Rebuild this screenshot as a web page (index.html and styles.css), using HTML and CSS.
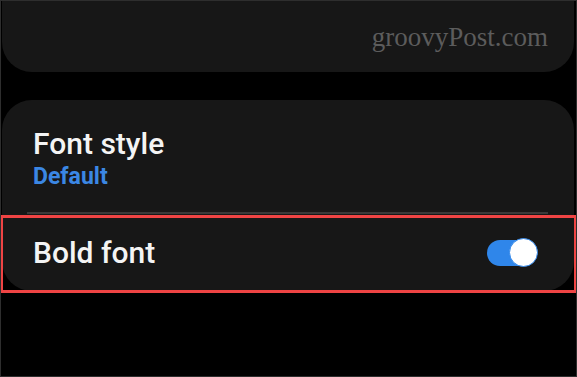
FILE: index.html
```html
<!DOCTYPE html>
<html lang="en">
<head>
    <meta charset="UTF-8">
    <meta name="viewport" content="width=device-width, initial-scale=1.0">
    <title>Font settings</title>
    <link rel="stylesheet" href="styles.css">
</head>
<body>
    <div class="screen">
        <div class="card card-top">
            <span class="watermark">groovyPost.com</span>
        </div>

        <div class="card card-font">
            <div class="item item-style">
                <div class="item-title">Font style</div>
                <div class="item-value">Default</div>
            </div>
            <div class="divider"></div>
            <div class="item item-bold">
                <div class="item-title">Bold font</div>
                <div class="switch">
                    <span class="switch-knob"></span>
                </div>
            </div>
        </div>

        <div class="highlight"></div>
    </div>
</body>
</html>
```

FILE: styles.css
```css
body {
    margin: 0;
    padding: 0;
    background-color: #000;
    font-family: Roboto, "Noto Sans", Arial, sans-serif;
}

.screen {
    position: relative;
    width: 575px;
    height: 375px;
    border: 1px solid #2e2e2e;
    background-color: #000;
    overflow: hidden;
}

.card {
    background-color: #171717;
    margin: 0 2px 0 1px;
}

.card-top {
    height: 71px;
    border-radius: 0 0 30px 30px;
    display: flex;
    justify-content: flex-end;
    align-items: flex-start;
    padding-right: 26px;
}

.watermark {
    font-family: "Liberation Serif", "DejaVu Serif", serif;
    font-size: 27px;
    color: #5c5c5c;
    margin-top: 21px;
}

.card-font {
    margin-top: 28px;
    height: 191px;
    border-radius: 30px;
}

.item {
    padding: 0 31px;
}

.item-style {
    padding-top: 25px;
    height: 112px;
    box-sizing: border-box;
}

.item-title {
    color: #f4f4f4;
    font-size: 30px;
    font-weight: 500;
    line-height: 38px;
}

.item-value {
    color: #3b87e4;
    font-size: 23px;
    font-weight: bold;
    line-height: 28px;
}

.divider {
    height: 2px;
    background-color: #393939;
    margin: 0 26px 0 25px;
}

.item-bold {
    display: flex;
    align-items: center;
    justify-content: space-between;
    height: 78px;
    padding-right: 37px;
}

.switch {
    position: relative;
    width: 50px;
    height: 26px;
    border-radius: 13px;
    background-color: #2f86ea;
}

.switch-knob {
    position: absolute;
    right: -1px;
    top: -2px;
    width: 27px;
    height: 27px;
    border-radius: 50%;
    background-color: #fff;
    border: 1px solid #2f86ea;
}

.highlight {
    position: absolute;
    left: -1px;
    top: 214px;
    width: 571px;
    height: 72px;
    border: 3px solid #ef4444;
}
```
